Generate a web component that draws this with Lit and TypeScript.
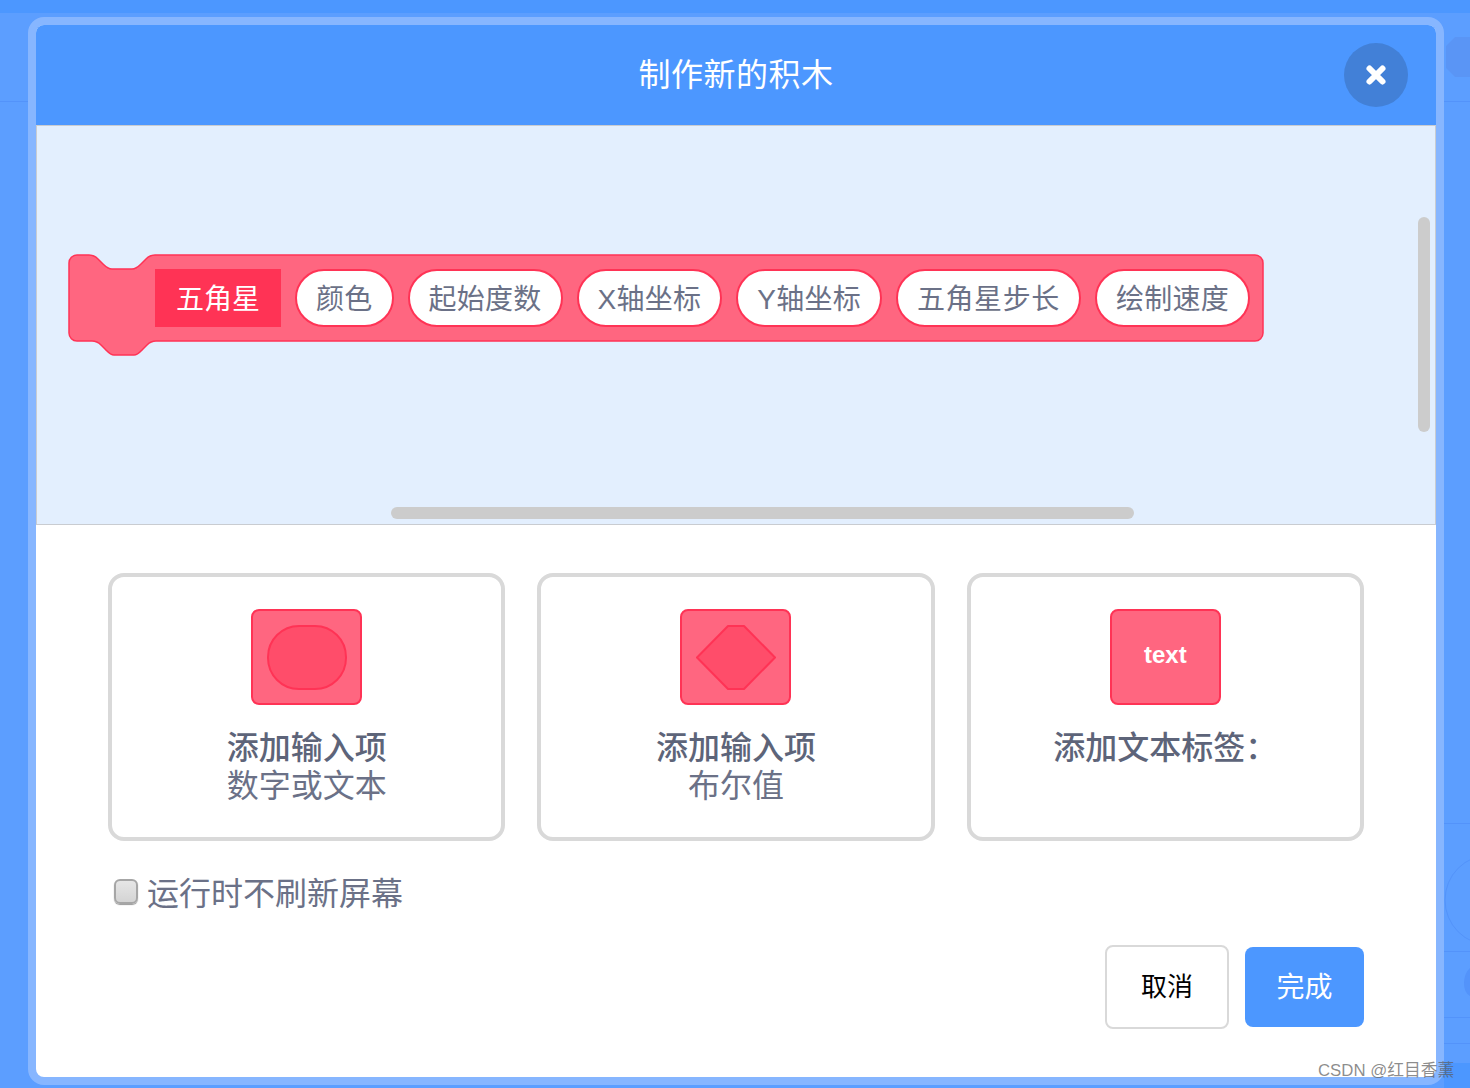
import { LitElement, html, css, svg } from "lit";
import { customElement } from "lit/decorators.js";

const pills = ["颜色", "起始度数", "X轴坐标", "Y轴坐标", "五角星步长", "绘制速度"];

@customElement("app-root")
export class AppRoot extends LitElement {
  static styles = css`
    :host {
      display: block;
      width: 1470px;
      height: 1088px;
      overflow: hidden;
      position: relative;
      background: #5c9eff;
      font-family: "Liberation Sans", "Noto Sans CJK SC", sans-serif;
      color: #575e75;
    }
    .decor { position: absolute; inset: 0; width: 1470px; height: 1088px; }
    .ring {
      position: absolute;
      left: 28px;
      top: 17px;
      width: 1400px;
      height: 1052px;
      border: 8px solid #87b6ff;
      border-radius: 16px;
      background: #fff;
      display: flex;
      flex-direction: column;
      overflow: hidden;
    }
    .header {
      height: 100px;
      flex: none;
      background: #4c97ff;
      color: #fff;
      display: grid;
      grid-template-columns: 1fr auto 1fr;
      align-items: center;
      padding: 0 28px;
      font-size: 32px;
    }
    .title { grid-column: 2; letter-spacing: 0.5px; padding-bottom: 6px; }
    .close {
      grid-column: 3;
      justify-self: end;
      width: 64px;
      height: 64px;
      border-radius: 50%;
      background: #4280d7;
      display: flex;
      align-items: center;
      justify-content: center;
    }
    .workspace {
      height: 400px;
      box-sizing: border-box;
      flex: none;
      position: relative;
      background: #e3effe;
      border: 1px solid #c9ccd1;
      padding: 128px 0 0 31px;
    }
    .block {
      position: relative;
      width: 1196px;
      height: 88px;
      box-sizing: border-box;
      padding: 15px 0 0 87px;
      display: flex;
      gap: 14px;
      font-size: 28px;
    }
    .block-shape { position: absolute; left: 0; top: 0; width: 1196px; height: 102px; }
    .label {
      position: relative;
      box-sizing: border-box;
      height: 58px;
      line-height: 58px;
      padding: 2px 21px 0;
      background: #ff3355;
      color: #fff;
    }
    .pill {
      position: relative;
      box-sizing: border-box;
      height: 58px;
      line-height: 58px;
      padding: 0 19px;
      background: #fff;
      border: 2px solid #ff3355;
      border-radius: 29px;
      color: #6b7187;
      white-space: nowrap;
      letter-spacing: 0.25px;
    }
    .pill.wide { letter-spacing: 0.6px; }
    .sb { position: absolute; background: #ccc; border-radius: 6px; }
    .sb.v { left: 1381px; top: 91px; width: 12px; height: 215px; }
    .sb.h { left: 354px; top: 381px; width: 743px; height: 12px; }
    .options {
      display: grid;
      grid-template-columns: repeat(3, 1fr);
      gap: 32px;
      padding: 48px 72px 0;
    }
    .card {
      box-sizing: border-box;
      height: 268px;
      border: 4px solid #d9d9d9;
      border-radius: 16px;
      padding-top: 32px;
      display: flex;
      flex-direction: column;
      align-items: center;
      font-size: 32px;
      line-height: 38px;
    }
    .icon {
      box-sizing: border-box;
      width: 111px;
      height: 96px;
      flex: none;
      border: 2px solid #ff3355;
      border-radius: 8px;
      background: #ff6680;
      margin-bottom: 24px;
      display: flex;
      align-items: center;
      justify-content: center;
      color: #fff;
      font-weight: 700;
      font-size: 24px;
      line-height: 24px;
    }
    .icon svg { display: block; }
    .text-glyph { margin-top: -4px; }
    .main { font-weight: 500; color: #5d6479; }
    .sub { color: #6b7187; }
    .check-row {
      display: flex;
      align-items: center;
      gap: 9px;
      margin: 32px 0 0 78px;
      height: 40px;
      font-size: 32px;
      color: #6b7187;
    }
    .check-label { padding-bottom: 4px; }
    .checkbox {
      box-sizing: border-box;
      width: 24px;
      height: 25px;
      margin-top: -4px;
      border: 2px solid #a6a6a6;
      border-radius: 6px;
      background: linear-gradient(#e6e6e6, #d4d4d4);
      box-shadow: 0 1px 1px #999;
    }
    .actions {
      display: flex;
      justify-content: flex-end;
      align-items: center;
      gap: 16px;
      padding: 32px 72px 0 0;
    }
    .btn {
      box-sizing: border-box;
      display: flex;
      align-items: center;
      justify-content: center;
      border-radius: 8px;
    }
    .cancel {
      width: 124px;
      height: 84px;
      border: 2px solid #d9d9d9;
      color: #000;
      font-size: 26px;
      padding-bottom: 5px;
    }
    .done {
      width: 119px;
      height: 80px;
      background: #4c97ff;
      color: #fff;
      font-size: 28px;
      padding-bottom: 4px;
    }
    .watermark {
      position: absolute;
      left: 1318px;
      top: 1059px;
      font-size: 16.800px;
      line-height: 24px;
      color: rgba(90, 90, 90, 0.7);
      white-space: nowrap;
    }
  `;

  render() {
    return html`
      <svg class="decor" viewBox="0 0 1470 1088" fill="none">
        <rect width="1470" height="13" fill="#4c97ff" />
        <path d="M0 101.500H1470" stroke="#5393fa" />
        <polygon points="1455,37 1470,37 1470,77 1455,77 1446,68 1446,46" fill="#5a95f5" />
        <path d="M1444 823.500H1470M1444 951.500H1470M1444 1017.500H1470M1444 1043.500H1470" stroke="#5393fa" />
        <circle cx="1490" cy="900" r="45" stroke="#5393fa" />
        <path d="M1470 968C1462 975 1462 992 1470 996Z" fill="#5393fa" />
        <rect x="1444" y="1063" width="26" height="25" fill="#4c97ff" />
      </svg>
      <div class="ring">
        <div class="header">
          <div class="title">制作新的积木</div>
          <div class="close">
            <svg width="22" height="22" viewBox="0 0 22 22">
              <path d="M4.500 4.500L17.500 17.500M17.500 4.500L4.500 17.500" stroke="#fff" stroke-width="6" stroke-linecap="round" />
            </svg>
          </div>
        </div>
        <div class="workspace">
          <div class="block">
            <svg class="block-shape" viewBox="0 0 1196 102">
              ${svg`<path
                d="M1 9a8 8 0 0 1 8-8H21c4 0 6 1 9 4l5 5c3 3 5 5 9 5h20c4 0 6-2 9-5l5-5c3-3 5-4 9-4H1187a8 8 0 0 1 8 8V79a8 8 0 0 1-8 8H88c-4 0-6 1-9 4l-4 4c-3 3-5 6-9 6H46c-4 0-6-3-9-6l-4-4c-3-3-5-4-9-4H9a8 8 0 0 1-8-8Z"
                fill="#ff6680" stroke="#ff3355" stroke-width="1.500" />`}
            </svg>
            <div class="label">五角星</div>
            ${pills.map((p) => html`<div class="pill ${p.length > 4 ? "wide" : ""}">${p}</div>`)}
          </div>
          <div class="sb v"></div>
          <div class="sb h"></div>
        </div>
        <div class="options">
          <div class="card">
            <div class="icon">
              <svg width="80" height="65" viewBox="0 0 80 65">
                <rect x="1" y="1" width="78" height="63" rx="31" fill="#ff4d6a" stroke="#ff3355" stroke-width="2" />
              </svg>
            </div>
            <div class="main">添加输入项</div>
            <div class="sub">数字或文本</div>
          </div>
          <div class="card">
            <div class="icon">
              <svg width="80" height="65" viewBox="0 0 80 65">
                <polygon points="1,32.500 32,1 48,1 79,32.500 48,64 32,64" fill="#ff4d6a" stroke="#ff3355" stroke-width="2" stroke-linejoin="round" />
              </svg>
            </div>
            <div class="main">添加输入项</div>
            <div class="sub">布尔值</div>
          </div>
          <div class="card">
            <div class="icon"><span class="text-glyph">text</span></div>
            <div class="main">添加文本标签：</div>
          </div>
        </div>
        <div class="check-row">
          <div class="checkbox"></div>
          <div class="check-label">运行时不刷新屏幕</div>
        </div>
        <div class="actions">
          <div class="btn cancel">取消</div>
          <div class="btn done">完成</div>
        </div>
      </div>
      <div class="watermark">CSDN @红目香薰</div>
    `;
  }
}
